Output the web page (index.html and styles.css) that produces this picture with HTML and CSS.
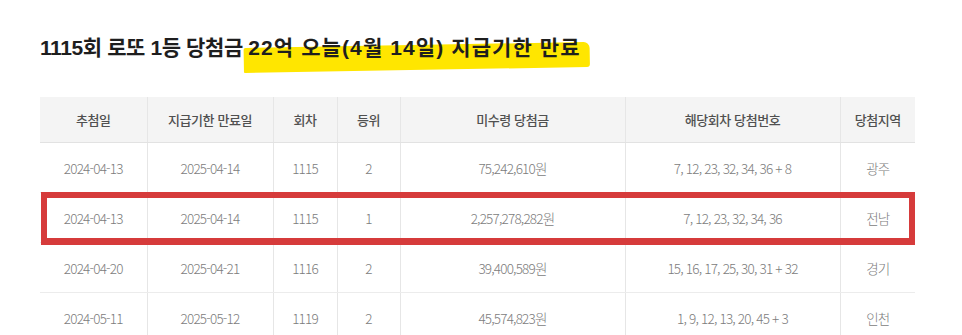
FILE: index.html
```html
<!DOCTYPE html>
<html lang="ko">
<head>
<meta charset="utf-8">
<title>1115회 로또 1등 당첨금</title>
<link rel="stylesheet" href="styles.css">
</head>
<body>
<div class="page">
  <h1 class="title">1115회 로또 1등 당첨금 <span class="hl">22억 오늘(4월 14일) 지급기한 만료</span></h1>
  <div class="table-wrap">
    <table class="lotto">
      <colgroup>
        <col class="c1"><col class="c2"><col class="c3"><col class="c4"><col class="c5"><col class="c6"><col class="c7">
      </colgroup>
      <thead>
        <tr><th>추첨일</th><th>지급기한 만료일</th><th>회차</th><th>등위</th><th>미수령 당첨금</th><th>해당회차 당첨번호</th><th>당첨지역</th></tr>
      </thead>
      <tbody>
        <tr><td>2024-04-13</td><td>2025-04-14</td><td>1115</td><td>2</td><td>75,242,610원</td><td>7, 12, 23, 32, 34, 36 + 8</td><td>광주</td></tr>
        <tr><td>2024-04-13</td><td>2025-04-14</td><td>1115</td><td>1</td><td>2,257,278,282원</td><td>7, 12, 23, 32, 34, 36</td><td>전남</td></tr>
        <tr><td>2024-04-20</td><td>2025-04-21</td><td>1116</td><td>2</td><td>39,400,589원</td><td>15, 16, 17, 25, 30, 31 + 32</td><td>경기</td></tr>
        <tr><td>2024-05-11</td><td>2025-05-12</td><td>1119</td><td>2</td><td>45,574,823원</td><td>1, 9, 12, 13, 20, 45 + 3</td><td>인천</td></tr>
      </tbody>
    </table>
    <div class="mark"></div>
  </div>
</div>
</body>
</html>
```
FILE: styles.css
```css
html, body {
  margin: 0;
  padding: 0;
  background: #fff;
}
.page {
  padding: 30px 0 0 40px;
  width: 875px;
}
.title {
  margin: 0;
  font-family: "Liberation Sans", "Noto Sans CJK KR", sans-serif;
  font-weight: 700;
  font-size: 21px;
  line-height: 36px;
  color: #1e1e1e;
  letter-spacing: -0.4px;
}
.hl {
  position: relative;
  z-index: 0;
  letter-spacing: 1.1px;
}
.hl::before {
  content: "";
  position: absolute;
  z-index: -1;
  left: -4px;
  right: -10px;
  top: 12px;
  height: 25px;
  background: #ffe600;
  transform: rotate(-1deg);
  transform-origin: left bottom;
  border-radius: 2px 6px 3px 1px;
}
.table-wrap {
  position: relative;
  margin-top: 31px;
}
.lotto {
  width: 875px;
  border-collapse: collapse;
  table-layout: fixed;
  font-family: "Noto Sans CJK KR", sans-serif;
}
.c1 { width: 107px; }
.c2 { width: 126px; }
.c3 { width: 64px; }
.c4 { width: 63px; }
.c5 { width: 225px; }
.c6 { width: 215px; }
.c7 { width: 75px; }
.lotto th, .lotto td {
  text-align: center;
  padding: 0;
  border-left: 1px solid #e6e6e6;
}
.lotto th:first-child, .lotto td:first-child {
  border-left: none;
}
.lotto th {
  height: 45px;
  background: #f4f4f4;
  color: #505050;
  font-weight: 500;
  font-size: 13px;
  letter-spacing: -0.4px;
  border-bottom: 1px solid #e2e2e2;
}
.lotto td {
  height: 49px;
  color: #7c7c7c;
  font-weight: 300;
  font-size: 13.5px;
  letter-spacing: -0.8px;
  border-bottom: 1px solid #ececec;
}
.mark {
  position: absolute;
  left: 1px;
  top: 95px;
  width: 874px;
  height: 53px;
  box-sizing: border-box;
  border: 6px solid #d63b3b;
  border-bottom-width: 7px;
  pointer-events: none;
}
```
